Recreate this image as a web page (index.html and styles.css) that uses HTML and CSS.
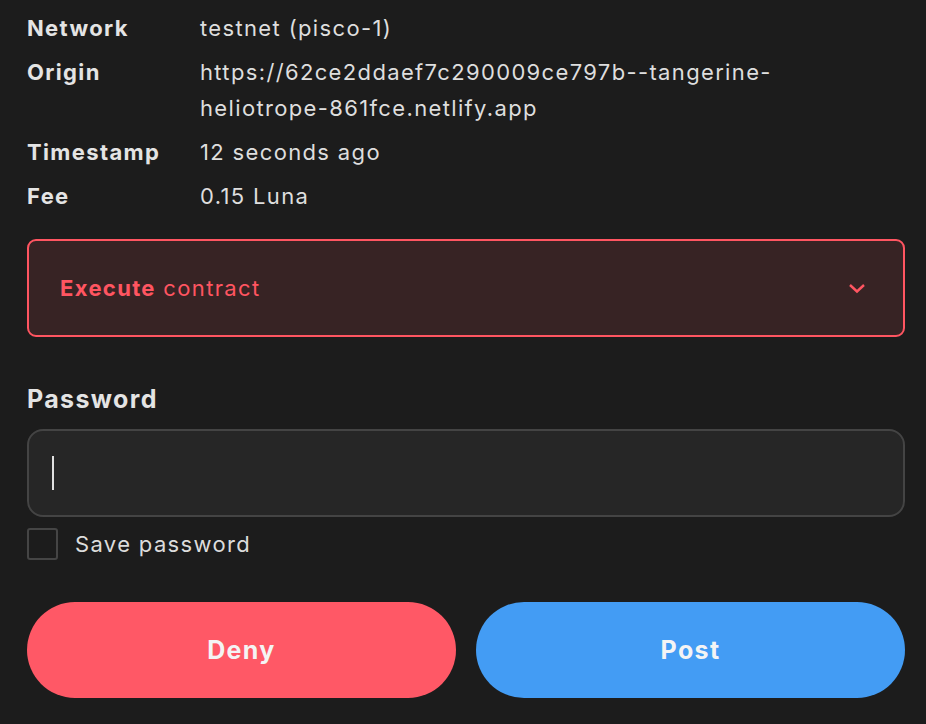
FILE: index.html
```html
<!DOCTYPE html>
<html lang="en">
<head>
<meta charset="utf-8">
<title>Confirm transaction</title>
<link rel="stylesheet" href="styles.css">
</head>
<body>
<main class="page">
  <dl class="details">
    <dt>Network</dt><dd>testnet (pisco-1)</dd>
    <dt>Origin</dt><dd>https://62ce2ddaef7c290009ce797b--tangerine-<br>heliotrope-861fce.netlify.app</dd>
    <dt>Timestamp</dt><dd>12 seconds ago</dd>
    <dt>Fee</dt><dd>0.15 Luna</dd>
  </dl>

  <div class="msg">
    <span class="msg-title"><strong>Execute</strong> contract</span>
    <svg class="chev" width="18" height="12" viewBox="0 0 18 12"><path d="M2 3 L9 9.5 L16 3" fill="none" stroke="#ff5561" stroke-width="2.4"/></svg>
  </div>

  <section class="form">
    <label class="field-label">Password</label>
    <div class="input"><span class="caret"></span></div>
    <div class="check"><span class="box"></span><span>Save password</span></div>
  </section>

  <div class="actions">
    <button class="btn deny">Deny</button>
    <button class="btn post">Post</button>
  </div>
</main>
</body>
</html>
```
FILE: styles.css
```css
html, body {
  margin: 0;
  background: #1c1c1c;
}
body {
  font-family: Inter, "Open Sans", sans-serif;
  color: #e2e2e2;
  letter-spacing: 1.35px;
}
.page {
  padding: 10px 21px 0 27px;
}
.details {
  margin: 0;
  display: grid;
  grid-template-columns: 173px 1fr;
  row-gap: 8px;
  font-size: 22px;
  line-height: 36px;
}
.details dt {
  font-weight: 700;
  color: #e4e4e4;
}
.details dd {
  margin: 0;
  color: #dedede;
}
.msg {
  margin-top: 25px;
  height: 94px;
  border: 2px solid #ff5561;
  border-radius: 9px;
  background: #372324;
  display: flex;
  align-items: center;
  justify-content: space-between;
  padding: 0 37px 0 31px;
  color: #ff5561;
  font-size: 22px;
}
.msg-title strong { font-weight: 700; }
.chev { display: block; }
.form {
  margin-top: 44px;
}
.field-label {
  display: block;
  font-size: 25px;
  font-weight: 700;
  color: #e4e4e4;
  line-height: 36px;
}
.input {
  margin-top: 12px;
  height: 84px;
  border: 2px solid #444;
  border-radius: 16px;
  background: #262626;
  display: flex;
  align-items: center;
  padding-left: 23px;
}
.caret {
  width: 2px;
  height: 34px;
  background: #e0e0e0;
}
.check {
  margin-top: 11px;
  display: flex;
  align-items: center;
  gap: 17px;
  font-size: 22px;
  color: #dcdcdc;
}
.box {
  width: 27px;
  height: 28px;
  border: 2px solid #454545;
  border-radius: 3px;
}
.actions {
  margin-top: 42px;
  display: grid;
  grid-template-columns: 1fr 1fr;
  gap: 20px;
}
.btn {
  height: 96px;
  border: 0;
  border-radius: 48px;
  font-family: inherit;
  font-size: 25px;
  font-weight: 700;
  letter-spacing: 1.35px;
  color: #f4f4f4;
}
.deny { background: #ff5866; }
.post { background: #439cf4; }
```
